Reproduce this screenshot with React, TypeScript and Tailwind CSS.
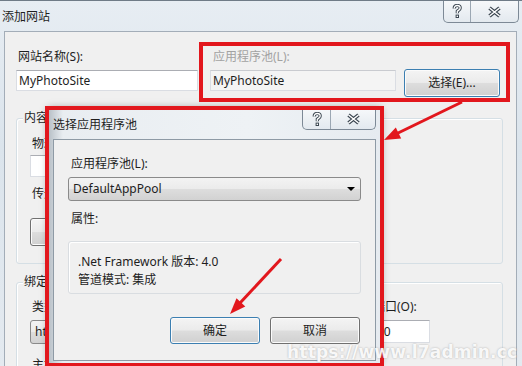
import React from 'react'

const textFont = "font-['Noto_Sans','Noto_Sans_CJK_SC',sans-serif]"

function QuestionIcon() {
  return (
    <svg width="10" height="15" viewBox="0 0 10 15">
      <path d="M2.2 4.6C2.2 2.6 3.6 1.5 5.2 1.5C7 1.5 8.2 2.6 8.2 4.1C8.2 5.7 6.6 6.1 5.3 7.3L5.3 9.2" fill="none" stroke="#3b4651" strokeWidth="3.2" />
      <path d="M2.2 4.6C2.2 2.6 3.6 1.5 5.2 1.5C7 1.5 8.2 2.6 8.2 4.1C8.2 5.7 6.6 6.1 5.3 7.3L5.3 9.2" fill="none" stroke="#ffffff" strokeWidth="1.3" />
      <rect x="3.6" y="10.6" width="3.4" height="3.4" fill="#3b4651" />
      <rect x="4.6" y="11.6" width="1.4" height="1.4" fill="#ffffff" />
    </svg>
  )
}

function CloseIcon() {
  return (
    <svg width="15" height="12" viewBox="0 0 15 12">
      <path d="M2.5 2L12.5 10M12.5 2L2.5 10" stroke="#3b4651" strokeWidth="3.6" />
      <path d="M2.5 2L12.5 10M12.5 2L2.5 10" stroke="#ffffff" strokeWidth="1.5" />
    </svg>
  )
}

function CaptionButtons({ className, helpWidth }: { className: string; helpWidth: string }) {
  return (
    <div className={`flex rounded-b-[5px] border border-t-0 border-[#7d8996] bg-[linear-gradient(180deg,#f6f8fa,#e3e9ef)] ${className}`}>
      <div className={`flex items-center justify-center border-r border-[#9ba7b3] ${helpWidth}`}>
        <QuestionIcon />
      </div>
      <div className="flex flex-1 items-center justify-center">
        <CloseIcon />
      </div>
    </div>
  )
}

function Btn({ children, focused, className }: { children: React.ReactNode; focused?: boolean; className: string }) {
  return (
    <div
      className={`flex items-center justify-center rounded-[3px] border text-[12px] text-[#1e1e1e] shadow-[inset_0_0_0_1px_#fbfbfb] bg-[linear-gradient(180deg,#f4f4f4_0%,#ebebeb_48%,#dddddd_52%,#d0d0d0_100%)] ${
        focused ? 'border-[#3c7fb1]' : 'border-[#707070]'
      } ${className}`}
    >
      {children}
    </div>
  )
}

function TextBox({ children, className }: { children?: React.ReactNode; className: string }) {
  return (
    <div className={`flex items-center border border-[#dadde3] border-t-[#abadb3] px-[2px] text-[12px] ${className}`}>
      {children}
    </div>
  )
}

function ComboBox({ children, className }: { children?: React.ReactNode; className: string }) {
  return (
    <div className={`flex items-center justify-between rounded-[3px] border border-[#8a8a8a] bg-[linear-gradient(180deg,#f3f3f3_0%,#ebebeb_48%,#dddddd_52%,#d2d2d2_100%)] pl-[4px] pr-[5px] text-[12px] ${className}`}>
      <span>{children}</span>
      <span className="h-0 w-0 border-x-[4px] border-t-[4px] border-x-transparent border-t-black" />
    </div>
  )
}

// group box: title sits on the top border, content padded 13px
function GroupBox({ title, children, className }: { title: string; children: React.ReactNode; className: string }) {
  return (
    <div className={`rounded-[3px] border border-[#d5dfe5] px-[13px] shadow-[inset_1px_1px_0_#ffffff] ${className}`}>
      <div className="-mt-[10px] -ml-[7px] w-fit bg-[#f0f0f0] px-[1px] leading-[18px]">{title}</div>
      {children}
    </div>
  )
}

export default function App() {
  return (
    <div className={`relative h-[366px] w-[522px] overflow-hidden border-t border-[#6f7b87] bg-[linear-gradient(180deg,#e7edf3_0%,#dbe4ec_40%,#e4eaf0_100%)] text-[12px] text-[#1e1e1e] ${textFont}`}>
      {/* outer window: 添加网站 */}
      <div className="flex h-[30px] items-start justify-between">
        <span className="pl-[2px] pt-[7px] leading-[18px]">添加网站</span>
        <CaptionButtons className="mr-[3px] h-[22px] w-[76px]" helpWidth="w-[27px]" />
      </div>

      <div className="ml-[4px] mr-[5px] h-[340px] border-l border-t border-r border-[#a3adb8] bg-[#f0f0f0]">
        <div className="flex pl-[11px] pt-[16px]">
          <div className="w-[182px]">
            <div className="pl-[2px] leading-[18px]">网站名称(S):</div>
            <TextBox className="mt-[4px] h-[21px] bg-white">MyPhotoSite</TextBox>
          </div>
          <div className="ml-[12px]">
            <div className="pl-[3px] leading-[18px] text-[#a2a2a2]">应用程序池(L):</div>
            <div className="mt-[4px] flex items-start gap-[8px]">
              <TextBox className="h-[21px] w-[186px] border-t-[#c9cbd0] bg-[#f4f4f4]">MyPhotoSite</TextBox>
              <Btn focused className="-mt-px h-[28px] w-[96px]">选择(E)...</Btn>
            </div>
          </div>
        </div>

        <div className="ml-[11px] w-[487px]">
          <GroupBox title="内容目录" className="mt-[21px] pb-[17px]">
            <div className="mt-[8px] pl-[2px] leading-[18px]">物理路径(P):</div>
            <div className="mt-[2px] flex gap-[6px]">
              <TextBox className="h-[22px] w-[316px] bg-white" />
              <Btn className="h-[22px] w-[26px]">...</Btn>
            </div>
            <div className="mt-[8px] pl-[2px] leading-[18px]">传递身份验证</div>
            <div className="mt-[15px] flex gap-[8px]">
              <Btn className="h-[28px] w-[92px]">连接为(C)...</Btn>
              <Btn className="h-[28px] w-[100px]">测试设置(G)...</Btn>
            </div>
          </GroupBox>

          <GroupBox title="绑定" className="mt-[18px] h-[120px]">
            <div className="mt-[7px] flex items-start">
              <div className="w-[110px]">
                <div className="pl-[2px] leading-[18px]">类型(T):</div>
                <ComboBox className="mt-[4px] h-[24px]">http</ComboBox>
              </div>
              <div className="ml-[10px] w-[212px]">
                <div className="pl-[2px] leading-[18px]">IP 地址(I):</div>
                <ComboBox className="mt-[4px] h-[24px]">全部未分配</ComboBox>
              </div>
              <div className="ml-[10px] w-[58px]">
                <div className="pl-[1px] leading-[18px]">端口(O):</div>
                <TextBox className="mt-[4px] h-[23px] bg-white pl-[4px]">80</TextBox>
              </div>
            </div>
            <div className="mt-[12px] pl-[2px] leading-[18px]">主机名(H):</div>
          </GroupBox>
        </div>
      </div>

      {/* dialog: 选择应用程序池 */}
      <div className="absolute left-[48px] top-[107px] h-[256px] w-[333px] border border-[#75828f] bg-[linear-gradient(90deg,#b9c1c8_0px,#e9edf1_14px,#eef2f5_60%,#e6ebf0_100%)] shadow-[0_0_8px_rgba(0,0,0,0.4)]">
        <div className="h-[30px] pl-[4px] pt-[7px] leading-[18px]">选择应用程序池</div>
        <CaptionButtons className="absolute right-[4px] top-0 h-[21px] w-[74px]" helpWidth="w-[28px]" />
        <div className="mx-[4px] h-[222px] border border-[#8e9aa5] bg-[#f0f0f0] px-[14px] pt-[15px]">
          <div className="pl-[3px] leading-[18px]">应用程序池(L):</div>
          <ComboBox className="mt-[4px] h-[24px]">DefaultAppPool</ComboBox>
          <div className="mt-[9px] pl-[3px] leading-[18px]">属性:</div>
          <div className="mt-[13px] h-[53px] rounded-[3px] border border-[#d9dde1] pl-[9px] pt-[11px] shadow-[inset_1px_1px_0_#ffffff]">
            <div className="leading-[18px]">.Net Framework 版本: 4.0</div>
            <div className="leading-[18px]">管道模式: 集成</div>
          </div>
          <div className="mt-[23px] flex justify-end gap-[10px] pr-[1px]">
            <Btn focused className="h-[27px] w-[90px]">确定</Btn>
            <Btn className="h-[27px] w-[90px]">取消</Btn>
          </div>
        </div>
      </div>

      {/* red highlight boxes */}
      <div className="absolute left-[199px] top-[41px] h-[60px] w-[311px] border-[4px] border-[#e2171d]" />
      <div className="absolute left-[45px] top-[105px] h-[261px] w-[339px] border-[4px] border-[#e2171d]" />

      {/* red arrows */}
      <svg className="pointer-events-none absolute left-0 top-0" width="522" height="366" viewBox="0 0 522 366">
        <line x1="462" y1="101" x2="396" y2="133" stroke="#e2171d" strokeWidth="3" />
        <polygon points="384,139 395.8,126.6 401.2,137.6" fill="#e2171d" />
        <line x1="281" y1="258" x2="240" y2="302" stroke="#e2171d" strokeWidth="3" />
        <polygon points="230,313 236.5,297.2 245.3,305.4" fill="#e2171d" />
      </svg>

      {/* watermark */}
      <div className="pointer-events-none absolute left-[287px] top-[339px] font-['DejaVu_Sans',sans-serif] text-[17px] font-bold tracking-[0.2px] text-white/90 [text-shadow:0_0_2px_rgba(120,120,120,0.6)]">
        https://www.l7admin.cc
      </div>
    </div>
  )
}
